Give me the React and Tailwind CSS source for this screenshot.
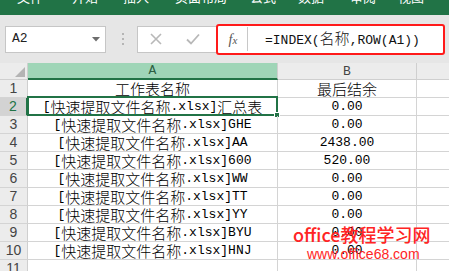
import React from 'react';

// splits a string into ascii / cjk runs so each gets its own font
const Mixed = ({ text }) =>
  text
    .split(/([\x00-\x7f]+)/)
    .filter(Boolean)
    .map((s, i) =>
      /^[\x00-\x7f]/.test(s) ? (
        <span key={i} className="font-['Liberation_Mono',monospace] text-[13px]">{s}</span>
      ) : (
        <span key={i} className="font-['Noto_Sans_CJK_SC',sans-serif] font-light text-[15px]">{s}</span>
      )
    );

const rows = [
  ['工作表名称', '最后结余'],
  ['[快速提取文件名称.xlsx]汇总表', '0.00'],
  ['[快速提取文件名称.xlsx]GHE', '0.00'],
  ['[快速提取文件名称.xlsx]AA', '2438.00'],
  ['[快速提取文件名称.xlsx]600', '520.00'],
  ['[快速提取文件名称.xlsx]WW', '0.00'],
  ['[快速提取文件名称.xlsx]TT', '0.00'],
  ['[快速提取文件名称.xlsx]YY', '0.00'],
  ['[快速提取文件名称.xlsx]BYU', '0.00'],
  ['[快速提取文件名称.xlsx]HNJ', '0.00'],
  ['', ''],
];

export default function App() {
  return (
    <div className="relative w-[449px] h-[271px] overflow-hidden bg-white">
      {/* ribbon tabs, cut off at the top */}
      <div className="h-[15px] bg-[#217346] overflow-hidden">
        <div className="flex -mt-[11px] text-white text-[13px] leading-[16px] font-['Noto_Sans_CJK_SC',sans-serif]">
          <span className="ml-[17px]">文件</span>
          <span className="ml-[29px]">开始</span>
          <span className="ml-[25px]">插入</span>
          <span className="ml-[26px]">页面布局</span>
          <span className="ml-[23px]">公式</span>
          <span className="ml-[22px]">数据</span>
          <span className="ml-[26px]">审阅</span>
          <span className="ml-[22px]">视图</span>
        </div>
      </div>

      {/* formula bar */}
      <div className="h-[48px] bg-[#e6e6e6] flex items-center">
        <div className="ml-[5px] w-[101px] h-[27px] bg-white border border-[#c6c6c6] flex items-center justify-between pl-[6px] pr-[5px] text-[#222]">
          <span className="font-['Liberation_Mono',monospace] text-[13px]">A2</span>
          <svg width="8" height="5" viewBox="0 0 8 5">
            <path d="M0 0h8L4 4.5z" fill="#6d6d6d" />
          </svg>
        </div>
        <svg className="ml-[15px]" width="3" height="13" viewBox="0 0 3 13">
          <rect x="1" y="0" width="2" height="2" fill="#b5b5b5" />
          <rect x="1" y="5" width="2" height="2" fill="#b5b5b5" />
          <rect x="1" y="10" width="2" height="2" fill="#b5b5b5" />
        </svg>
        <div className="ml-[13px] w-[79px] h-[27px] bg-white border border-[#c6c6c6] border-r-0 flex items-center">
          <svg className="ml-[12px]" width="12" height="12" viewBox="0 0 12 12">
            <path d="M1 1l10 10M11 1L1 11" stroke="#b8b8b8" strokeWidth="1.6" />
          </svg>
          <svg className="ml-[24px]" width="14" height="12" viewBox="0 0 14 12">
            <path d="M1 6.5l4 4L13 1.5" stroke="#b8b8b8" strokeWidth="1.8" fill="none" />
          </svg>
        </div>
        <div className="w-[229px] h-[31px] bg-white border-2 border-[#ff1a1a] rounded-[3px] flex items-center">
          <span className="ml-[5px] w-[20px] text-center font-['Liberation_Serif',serif] italic text-[14px] text-[#555]">
            f<span className="text-[11px]">x</span>
          </span>
          <div className="ml-[4px] w-px h-[24px] bg-[#c8c8c8]" />
          <div className="ml-[17px] leading-[18px] text-[#111] whitespace-nowrap">
            <Mixed text="=INDEX(名称,ROW(A1))" />
          </div>
        </div>
      </div>

      {/* sheet grid */}
      <div className="grid grid-cols-[28px_250px_139px_1fr] grid-rows-[17px_repeat(11,18px)]">
        <div className="relative bg-[#ececec] border-r border-b border-[#cfcfcf]">
          <svg className="absolute right-[2px] bottom-[2px]" width="10" height="10" viewBox="0 0 10 10">
            <path d="M10 0v10H0z" fill="#b4b4b4" />
          </svg>
        </div>
        <div className="bg-[#9fd5b7] border-r border-[#cfcfcf] border-b-2 border-b-[#217346] flex items-center justify-center text-[#2d5e43] leading-none">
          <span className="font-['Liberation_Mono',monospace] text-[13px]">A</span>
        </div>
        <div className="bg-[#ececec] border-r border-b border-[#cfcfcf] flex items-center justify-center text-[#444] leading-none">
          <span className="font-['Liberation_Mono',monospace] text-[13px]">B</span>
        </div>
        <div className="bg-[#ececec] border-b border-[#cfcfcf]" />

        {rows.map(([a, b], i) => {
          const sel = i === 1;
          return (
            <React.Fragment key={i}>
              <div
                className={`flex items-center justify-center font-['Liberation_Sans',sans-serif] text-[14px] border-b border-[#d4d4d4] ${
                  sel
                    ? 'bg-[#d3d3d3] text-[#217346] border-r-2 border-r-[#217346]'
                    : 'bg-[#ececec] text-[#444] border-r border-r-[#cfcfcf]'
                }`}
              >
                {i + 1}
              </div>
              <div className="relative flex items-center justify-center whitespace-nowrap leading-[18px] text-black border-r border-b border-[#d4d4d4]">
                <Mixed text={a} />
                {sel && (
                  <div className="absolute -left-[1px] -top-[2px] -right-[1px] -bottom-[1px] border-2 border-[#217346]">
                    <div className="absolute -right-[4px] -bottom-[4px] w-[6px] h-[6px] bg-[#217346] border border-white" />
                  </div>
                )}
              </div>
              <div className="flex items-center justify-center whitespace-nowrap leading-[18px] text-black border-r border-b border-[#d4d4d4]">
                <Mixed text={b} />
              </div>
              <div className="border-b border-[#d4d4d4]" />
            </React.Fragment>
          );
        })}
      </div>

      {/* watermark */}
      <div className="absolute left-[293px] top-[221px] text-[#ff2424] text-[18px] leading-[26px] font-medium font-['Noto_Sans_CJK_SC',sans-serif] whitespace-nowrap">
        office教程学习网
      </div>
      <div className="absolute left-[307px] top-[246px] text-[#ff2424] text-[14px] leading-[16px] font-['Liberation_Sans',sans-serif] whitespace-nowrap">
        www.office68.com
      </div>
    </div>
  );
}
